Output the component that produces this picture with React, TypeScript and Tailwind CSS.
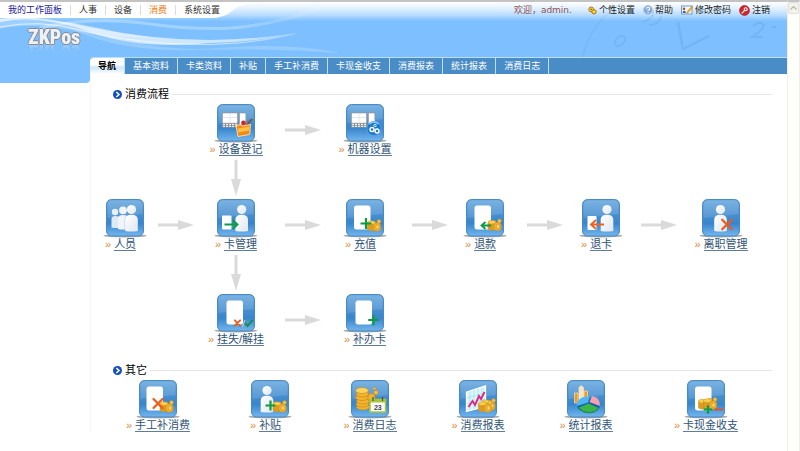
import React, { type ReactNode } from "react";

/* ---------- icon parts ---------- */

function Tile({ children }: { children: ReactNode }) {
  return (
    <svg width="44" height="39" viewBox="0 0 44 39" aria-hidden="true" className="block shrink-0">
      <ellipse cx="22" cy="36.8" rx="21.5" ry="1.7" fill="#8f8f8f" opacity="0.75" />
      <rect x="3.5" y="0.5" width="37" height="36.5" rx="5" fill="url(#tileFill)" stroke="#3f82bd" strokeWidth="0.9" />
      <path d="M4.5 19V6q0-4.5 4.5-4.5h26q4.5 0 4.5 4.500v9Q22 17 4.500 19z" fill="#fff" opacity="0.12" />
      {children}
    </svg>
  );
}

function Person({ x = 0 }: { x?: number }) {
  return (
    <g transform={`translate(${x} 0)`}>
      <circle cx="0" cy="10.500" r="4.600" fill="url(#whiteFill)" />
      <path d="M-6.300 32V20.500q0-4.800 6.300-4.800t6.300 4.800V32q-6.300 1.200-12.600 0z" fill="url(#whiteFill)" />
    </g>
  );
}

function Card({ x = 11 }: { x?: number }) {
  return <rect x={x} y="6.500" width="16.500" height="24" rx="2.500" fill="#fff" />;
}

function Plus({ x, y, r = 5 }: { x: number; y: number; r?: number }) {
  return <path d={`M${x - r} ${y}H${x + r}M${x} ${y - r}V${y + r}`} stroke="#0f9a46" strokeWidth="2.200" fill="none" />;
}

function Cross({ x, y, r = 4.5 }: { x: number; y: number; r?: number }) {
  return (
    <path
      d={`M${x - r} ${y - r}L${x + r} ${y + r}M${x + r} ${y - r}Q${x} ${y} ${x - r} ${y + r}`}
      stroke="#ee5a1c"
      strokeWidth={r / 5 + 1.3}
      fill="none"
      strokeLinecap="round"
    />
  );
}

function Coins({ x, y }: { x: number; y: number }) {
  return (
    <g transform={`translate(${x} ${y})`} stroke="#c98a1e" strokeWidth="0.500">
      <path d="M-7-2v6.500q4 2.500 8 0V-2z" fill="#e0a024" />
      <path d="M-7 0q4 2.400 8 0M-7 2.400q4 2.400 8 0" fill="none" />
      <ellipse cx="-3" cy="-2.300" rx="4" ry="1.900" fill="#fbd04c" />
      <ellipse cx="2.500" cy="2" rx="3.800" ry="4.300" fill="#f0ae28" />
      <ellipse cx="3" cy="2" rx="1.500" ry="2" fill="#fde187" />
      <circle cx="4.500" cy="-3.500" r="1.900" fill="#f8c440" />
    </g>
  );
}

function Device() {
  return (
    <g>
      <rect x="8" y="8.500" width="16" height="15" fill="#8f9496" />
      <rect x="8.800" y="9.300" width="14.400" height="9.500" fill="#fff" />
      <path d="M16 9.300v9M9 13.500h14" stroke="#d8dde0" strokeWidth="0.700" />
      <path d="M9 20.300h14.500M9 22.300h14.500" stroke="#e9e9e9" strokeWidth="1.200" strokeDasharray="2 1" />
      <rect x="24.800" y="8.500" width="7.700" height="14" fill="#8f9496" />
      <rect x="25.800" y="9.300" width="5.700" height="11.500" fill="#fff" />
    </g>
  );
}

const icons = {
  register: (
    <>
      <Device />
      <path d="M38 15l-7 8" stroke="#8a4a24" strokeWidth="1.600" />
      <circle cx="29.500" cy="19" r="2.400" fill="#d3242d" />
      <path d="M22 21.500l5-.8 1.500 1.300 8-1.500-.8 10-11.700 2z" fill="#f58a12" stroke="#ffe3b0" strokeWidth="0.900" />
      <path d="M24 24.500l11.500-2-.5 4-10.500 2z" fill="#ffc04a" />
    </>
  ),
  machine: (
    <>
      <Device />
      <circle cx="31" cy="24.500" r="7.200" fill="#1e78cb" stroke="#63b1f1" strokeWidth="0.700" />
      <path d="M26.500 20q4.500-4 9 0" stroke="#8ecbfa" strokeWidth="1.300" fill="none" />
      <circle cx="29" cy="25.500" r="2" fill="none" stroke="#fff" strokeWidth="1.400" />
      <circle cx="34" cy="27" r="2" fill="none" stroke="#fff" strokeWidth="1.400" />
      <circle cx="32" cy="21.500" r="1.200" fill="none" stroke="#d5ecff" strokeWidth="1" />
    </>
  ),
  people: (
    <>
      <circle cx="12" cy="13" r="3.200" fill="#e8f0f7" />
      <path d="M8.500 28.500V20q0-3 4-3t4 3v8.500q-4 1-8 0z" fill="#dfe9f3" />
      <circle cx="20" cy="11.300" r="3.900" fill="#f1f5f9" />
      <path d="M15 30V19.500q0-3.500 5-3.500t5 3.500V30q-5 1-10 0z" fill="#f1f5f9" />
      <path d="M22 31V20q0-3 2-4" stroke="#a9c6e2" strokeWidth="0.800" fill="none" />
      <Person x={28.500} />
    </>
  ),
  cardManage: (
    <>
      <rect x="8" y="16.500" width="9.500" height="14" rx="1" fill="#fff" />
      <Person x={27.700} />
      <path d="M10.500 25.500H23M18.500 21l5 4.500-5 4.500" stroke="#0f9a46" strokeWidth="1.900" fill="none" />
    </>
  ),
  recharge: (
    <>
      <Card />
      <Coins x={31.500} y={26} />
      <Plus x={23} y={24.500} r={5.500} />
    </>
  ),
  refund: (
    <>
      <Card x={11.500} />
      <Coins x={32} y={25.500} />
      <path d="M28 26.500H18.500M22.500 23l-4 3.500 4 3.500" stroke="#0f9a46" strokeWidth="1.800" fill="none" />
    </>
  ),
  returnCard: (
    <>
      <rect x="8.500" y="17" width="9" height="14" rx="1" fill="#fff" />
      <Person x={28} />
      <path d="M25 25.500H12.500M17 21l-5 4.500 5 4.500" stroke="#f0621f" strokeWidth="1.900" fill="none" />
    </>
  ),
  leave: (
    <>
      <Person x={21.500} />
      <Cross x={28} y={25.500} r={4.800} />
    </>
  ),
  loss: (
    <>
      <Card x={12.500} />
      <Cross x={23.500} y={29} r={2.700} />
      <path d="M28.300 33l2.700-7" stroke="#c9d5c8" strokeWidth="1" />
      <path d="M31 29l2.500 3 5-6" stroke="#12913f" strokeWidth="1.900" fill="none" />
    </>
  ),
  reissue: (
    <>
      <Card x={12.500} />
      <Plus x={30.500} y={26} r={5.300} />
    </>
  ),
  manual: (
    <>
      <Card x={10.500} />
      <Coins x={31} y={26} />
      <Cross x={22} y={23.500} />
    </>
  ),
  subsidy: (
    <>
      <Person x={19} />
      <Coins x={32} y={26} />
      <Plus x={22.500} y={25.500} r={5} />
    </>
  ),
  log: (
    <>
      <g fill="#f2b32e" stroke="#c5831a" strokeWidth="0.600">
        <ellipse cx="15" cy="27" rx="6.500" ry="3" />
        <ellipse cx="14.500" cy="24" rx="6.500" ry="3" />
        <ellipse cx="15" cy="21" rx="6.500" ry="3" />
        <ellipse cx="14" cy="17.500" rx="6.500" ry="3" />
        <ellipse cx="14.500" cy="14" rx="6.500" ry="3" />
        <ellipse cx="14" cy="10.500" rx="6.500" ry="3" fill="#fbd35a" />
        <ellipse cx="23.500" cy="18" rx="3.500" ry="4.500" />
        <circle cx="28" cy="12.500" r="2.200" fill="#f8c440" />
        <circle cx="26.500" cy="8.500" r="1.400" fill="#f8c440" />
      </g>
      <rect x="22" y="19.500" width="15.500" height="12.500" fill="#fff" stroke="#a8c63a" strokeWidth="1.500" />
      <path d="M22 21h15.500" stroke="#a8c63a" strokeWidth="3" />
      <path d="M25 17v4M34.500 17v4" stroke="#6c4e38" strokeWidth="1.300" />
      <text x="29.800" y="30" textAnchor="middle" fontSize="7" fontWeight="700" fill="#444" fontFamily="'Liberation Sans', sans-serif">
        23
      </text>
    </>
  ),
  report: (
    <>
      <path d="M10.500 12L29.500 6v20.500l-19 5z" fill="#d9f6fb" stroke="#fff" strokeWidth="1.300" />
      <path d="M14 11v19M18 10v19M22 9v18M26 7.500v19M11 18l18-5M11 24l18-5" stroke="#9fdbe8" strokeWidth="0.600" />
      <path d="M12.500 27l4-6 2.500 4 4-9 2 3 3.500-7" stroke="#dd2a86" strokeWidth="1.900" fill="none" />
      <Coins x={33} y={24} />
      <Coins x={29.500} y={26} />
    </>
  ),
  stats: (
    <>
      <g stroke="#fff0d0" strokeWidth="0.600">
        <path d="M10.500 13h3.500v10h-3.500z" fill="#f39b1d" />
        <path d="M20 11h3.500v9H20z" fill="#f39b1d" />
        <path d="M15 7.500l2-2 2.500 2V21H15z" fill="#fbe3bd" />
      </g>
      <ellipse cx="24.500" cy="25" rx="11.500" ry="7.500" fill="#1863a8" />
      <path d="M24 22.500L13 26a11.500 8 0 0 1 13-9.500z" fill="#4fb5f5" />
      <path d="M25.500 22l2.500-6q8.500 1.500 8 10z" fill="#f9a0ad" />
      <path d="M24.500 23.500L15 27.500q3.500 4.500 10 4.500t9.500-4z" fill="#39b54a" />
      <path d="M15 28q3.500 4.800 10 4.800t9.500-4.300" stroke="#1c8a38" strokeWidth="0.900" fill="none" />
    </>
  ),
  cash: (
    <>
      <Card />
      <Coins x={21.500} y={23.500} />
      <Coins x={26.500} y={23} />
      <Plus x={24} y={29.500} r={4.300} />
      <path d="M30.500 29.500H39" stroke="#e2522b" strokeWidth="2" />
    </>
  ),
};

type IconName = keyof typeof icons;

/* ---------- flow chart ---------- */

function Node({ icon, label, className = "" }: { icon: IconName; label: string; className?: string }) {
  return (
    <a href="#" className={`flex flex-col items-center text-[#2f5377] ${className}`}>
      <Tile>{icons[icon]}</Tile>
      <span className="flex min-w-10 items-center gap-[3px] whitespace-nowrap text-[11px] leading-[13px]">
        <span className="text-[#d98a3d]">»</span>
        <span className="border-b border-[#5f7d9b] leading-3">{label}</span>
      </span>
    </a>
  );
}

function Arrow({ down = false, className }: { down?: boolean; className: string }) {
  return down ? (
    <svg width="12" height="36" viewBox="0 0 12 36" className={className} aria-hidden="true">
      <path d="M4.500 0h3v19H11L6 36 1 19h3.500z" fill="#dadada" />
    </svg>
  ) : (
    <svg width="36" height="12" viewBox="0 0 36 12" className={className} aria-hidden="true">
      <path d="M0 4.500v3h20V11l16-5L20 1v3.500z" fill="#dadada" />
    </svg>
  );
}

function SectionTitle({ children }: { children: ReactNode }) {
  return (
    <h2 className="flex h-4 items-center gap-[3px] pr-[15px] pl-[22px] text-[11px] leading-4 text-black">
      <svg width="9" height="9" viewBox="0 0 9 9" aria-hidden="true" className="shrink-0">
        <circle cx="4.500" cy="4.500" r="4.500" fill="#1350b8" />
        <path d="M3.300 2l2.700 2.500L3.300 7" stroke="#fff" strokeWidth="1.500" fill="none" />
      </svg>
      {children}
      <span className="h-px flex-1 bg-[#e6e6e6]" />
    </h2>
  );
}

/* ---------- header ---------- */

const modules = ["我的工作面板", "人事", "设备", "消费", "系统设置"];
const tabs = ["导航", "基本资料", "卡类资料", "补贴", "手工补消费", "卡现金收支", "消费报表", "统计报表", "消费日志"];

const tools: { label: string; icon: ReactNode }[] = [
  {
    label: "个性设置",
    icon: (
      <svg width="9" height="9" viewBox="0 0 9 9" aria-hidden="true">
        <circle cx="3.200" cy="3.400" r="2.400" fill="#ffe04a" stroke="#a8741a" strokeWidth="1" />
        <circle cx="6" cy="5.800" r="2.200" fill="#ffd22e" stroke="#a8741a" strokeWidth="1" />
        <circle cx="3.200" cy="3.400" r=".8" fill="#8a5a12" />
      </svg>
    ),
  },
  {
    label: "帮助",
    icon: (
      <svg width="10" height="10" viewBox="0 0 10 10" aria-hidden="true">
        <circle cx="5" cy="5" r="4.500" fill="#86a9dc" stroke="#b7cbe9" />
        <path d="M3.500 3.800q0-1.500 1.600-1.500t1.500 1.400q0 .9-1.500 1.500v.8M5.100 7v1" stroke="#fff" strokeWidth="1.100" fill="none" />
      </svg>
    ),
  },
  {
    label: "修改密码",
    icon: (
      <svg width="12" height="10" viewBox="0 0 12 10" aria-hidden="true">
        <rect x=".5" y="1" width="10.500" height="8" fill="#f4f8ff" stroke="#6f9bd1" />
        <circle cx="3" cy="3.800" r="1.300" fill="#b5482a" />
        <path d="M1.500 8q0-2.500 1.700-2.500T5 8z" fill="#3d66ad" />
        <path d="M5.500 8.500l1-2.500 4.500-5 1 1-4.500 5.500z" fill="#f5b524" stroke="#a8741a" strokeWidth=".4" />
      </svg>
    ),
  },
  {
    label: "注销",
    icon: (
      <svg width="11" height="11" viewBox="0 0 11 11" aria-hidden="true">
        <circle cx="5.500" cy="5.500" r="5" fill="#d0252a" stroke="#a51a1e" strokeWidth=".6" />
        <circle cx="6.700" cy="4.200" r="1.500" fill="none" stroke="#fff" strokeWidth="1.100" />
        <path d="M5.700 5.300L2.700 8.300" stroke="#fff" strokeWidth="1.200" />
      </svg>
    ),
  },
];

function HeaderArt() {
  return (
    <>
      <svg className="absolute top-0 left-0" width="400" height="55" viewBox="0 0 400 55" fill="none" aria-hidden="true">
        <defs>
          <linearGradient id="waveFade" gradientUnits="userSpaceOnUse" x1="0" y1="0" x2="340" y2="0">
            <stop offset="0" stopColor="#fff" stopOpacity=".7" />
            <stop offset=".7" stopColor="#fff" stopOpacity=".6" />
            <stop offset="1" stopColor="#fff" stopOpacity="0" />
          </linearGradient>
        </defs>
        <path d="M0 20Q40 12 90 30T210 41Q260 40 297 31Q260 37 210 38Q150 38 90 25T0 17z" fill="url(#waveFade)" />
        <path d="M0 25Q40 17 80 28T180 42T295 32" stroke="url(#waveFade)" strokeWidth="1" />
        <path d="M40 26Q90 14 150 22T250 24T320 6" stroke="url(#waveFade)" strokeWidth="3" opacity=".45" />
        <path d="M60 21Q110 50 190 48T340 51Q290 40 220 46T60 21z" fill="#fff" opacity=".18" />
        <path d="M0 18Q60 16 100 26T180 36Q110 36 70 28T0 27z" fill="#fff" opacity=".25" />
        <path d="M0 0H262Q240 1 232 9T205 16H0z" fill="#fff" />
      </svg>
      <svg className="absolute top-0 right-0" width="210" height="55" viewBox="0 0 210 55" fill="none" aria-hidden="true">
        <g stroke="#4f93cf" opacity=".24">
          <path d="M6 55Q12 22 45 1" strokeWidth="2" opacity=".5" />
          <path d="M101 20l5 27 26-13" strokeWidth="2.500" />
          <ellipse cx="43" cy="39" rx="6" ry="4" transform="rotate(-45 43 39)" strokeWidth="1.500" />
          <path d="M66 20q12-4 10-12M72 23q12-1 12-9" strokeWidth="1.500" />
          <path d="M176 24q6-5 10-2t-11 13h11M195 25h4" strokeWidth="2" />
        </g>
      </svg>
    </>
  );
}

export default function App() {
  return (
    <div className="flex min-h-screen bg-white font-['Liberation_Sans','Noto_Sans_CJK_SC',sans-serif]">
      <svg width="0" height="0" className="absolute" aria-hidden="true">
        <defs>
          <linearGradient id="tileFill" x1="0" y1="0" x2="0" y2="1">
            <stop offset="0" stopColor="#69a9df" />
            <stop offset=".45" stopColor="#448dcf" />
            <stop offset=".65" stopColor="#3885cc" />
            <stop offset="1" stopColor="#72b6ee" />
          </linearGradient>
          <linearGradient id="whiteFill" x1="0" y1="0" x2="1" y2="1">
            <stop offset="0" stopColor="#fff" />
            <stop offset="1" stopColor="#dfe7ef" />
          </linearGradient>
        </defs>
      </svg>

      <div className="min-w-0 flex-1">
        <header className="relative h-[57px] border-t-2 border-[#c3c3c3] bg-[#7ec0ff] bg-[linear-gradient(#fff,#e4f2ff_6px,#b9dcff_13px,#7ec0ff_19px)]">
          <HeaderArt />
          <div className="relative flex h-4 items-center justify-between text-[9px] leading-4">
            <nav className="flex items-center divide-x divide-[#dcdcdc] leading-[10px]">
              {modules.map((name) => (
                <a
                  key={name}
                  href="#"
                  className={`px-2 whitespace-nowrap ${
                    name === "消费" ? "text-[#f07a14]" : name === "我的工作面板" ? "text-[#1a1a9c]" : "text-[#333]"
                  }`}
                >
                  {name}
                </a>
              ))}
            </nav>
            <div className="flex items-center gap-2 pr-[17px] whitespace-nowrap text-[#222]">
              <span className="mr-2 font-['DejaVu_Sans','Noto_Sans_CJK_SC',sans-serif] text-[#93504f]">欢迎，admin.</span>
              {tools.map((tool) => (
                <a key={tool.label} href="#" className="flex items-center gap-[2px]">
                  {tool.icon}
                  {tool.label}
                </a>
              ))}
            </div>
          </div>
          <div className="relative pt-[9px] pl-7">
            <div className="w-max font-['Roboto_Condensed','Liberation_Sans_Narrow','Liberation_Sans',sans-serif] text-[20px] leading-5 font-black text-[#eef2f6] [-webkit-box-reflect:below_-5px_linear-gradient(transparent_55%,#0006)] [text-shadow:1px_0_#858a92,-1px_0_#858a92,0_1px_#858a92,0_-1px_#858a92]">
              ZKPos
            </div>
          </div>
        </header>

        <div className="flex">
          <div className="h-[26px] w-[90px] shrink-0 rounded-br-[4px] bg-[#7ec0ff]" />
          <div className="min-w-0 flex-1">
            <div className="bg-[#7ec0ff]">
              <nav className="flex h-[17px] divide-x divide-[#b9e0fb] overflow-hidden rounded-tl-[4px] border-t border-[#b9e0fb] bg-[#4a8cc5] text-[9px] leading-4 text-white">
                {tabs.map((name, i) => (
                  <a
                    key={name}
                    href="#"
                    aria-current={i === 0 ? "page" : undefined}
                    className={`px-2 whitespace-nowrap ${
                      i === 0 ? "bg-[linear-gradient(#fff_40%,#cfe6fb_60%,#fff)] font-bold text-black" : ""
                    }`}
                  >
                    {name}
                  </a>
                ))}
                <span className="flex-1" />
              </nav>
            </div>

            <main className="border-l border-[#f1f6fb] pt-3">
              <section>
                <SectionTitle>消费流程</SectionTitle>
                <div className="grid grid-cols-[66fr_36fr_84fr_50fr_74fr_56fr_54fr_66fr_46fr_70fr_54fr_39fr] grid-rows-[52px_43px_52px_43px_52px] items-center justify-items-center pt-[2px] pl-px">
                  <Node icon="register" label="设备登记" className="col-start-3 row-start-1 w-0" />
                  <Arrow className="col-start-4 row-start-1" />
                  <Node icon="machine" label="机器设置" className="col-start-5 row-start-1 w-0" />

                  <Arrow down className="col-start-3 row-start-2" />

                  <Node icon="people" label="人员" className="col-start-1 row-start-3 w-0" />
                  <Arrow className="col-start-2 row-start-3" />
                  <Node icon="cardManage" label="卡管理" className="col-start-3 row-start-3 w-0" />
                  <Arrow className="col-start-4 row-start-3" />
                  <Node icon="recharge" label="充值" className="col-start-5 row-start-3 w-0" />
                  <Arrow className="col-start-6 row-start-3" />
                  <Node icon="refund" label="退款" className="col-start-7 row-start-3 w-0" />
                  <Arrow className="col-start-8 row-start-3" />
                  <Node icon="returnCard" label="退卡" className="col-start-9 row-start-3 w-0" />
                  <Arrow className="col-start-10 row-start-3" />
                  <Node icon="leave" label="离职管理" className="col-start-11 row-start-3 w-0" />

                  <Arrow down className="col-start-3 row-start-4" />

                  <Node icon="loss" label="挂失/解挂" className="col-start-3 row-start-5 w-0" />
                  <Arrow className="col-start-4 row-start-5" />
                  <Node icon="reissue" label="补办卡" className="col-start-5 row-start-5 w-0" />
                </div>
              </section>

              <section className="pt-4">
                <SectionTitle>其它</SectionTitle>
                <div className="grid grid-cols-[112fr_112fr_88fr_128fr_88fr_152fr_5fr] justify-items-center pt-[2px] pl-[11px]">
                  <Node icon="manual" label="手工补消费" />
                  <Node icon="subsidy" label="补贴" />
                  <Node icon="log" label="消费日志" />
                  <Node icon="report" label="消费报表" />
                  <Node icon="stats" label="统计报表" />
                  <Node icon="cash" label="卡现金收支" />
                </div>
              </section>
            </main>
          </div>
        </div>
      </div>

      <div className="w-[13px] shrink-0 border-x border-t-2 border-x-[#efeee8] border-t-[#c3c3c3] bg-[#fefefa]">
        <button type="button" aria-label="向上滚动" className="flex h-3 w-full items-center justify-center rounded-[2px] border border-[#e2e1da] bg-[#f3f2ec]">
          <svg width="7" height="4" viewBox="0 0 7 4" aria-hidden="true">
            <path d="M.5 3.500l3-3 3 3" stroke="#b9b8b0" strokeWidth="1.200" fill="none" />
          </svg>
        </button>
      </div>
    </div>
  );
}
